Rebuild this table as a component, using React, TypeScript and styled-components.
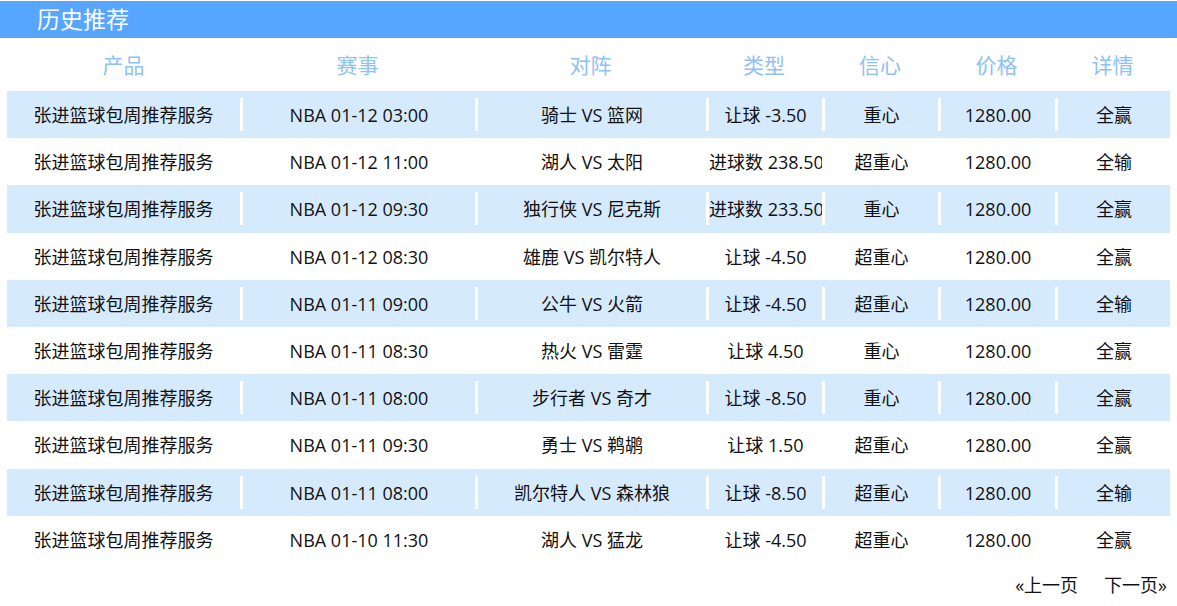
import styled, { createGlobalStyle } from "styled-components";

const GlobalStyle = createGlobalStyle`
    html, body {
        margin: 0;
        padding: 0;
        background: #ffffff;
        font-family: "Open Sans", "Noto Sans CJK SC", sans-serif;
    }
`;

const Page = styled.div`
    width: 1177px;
    padding-top: 1px;
`;

const TitleBar = styled.div`
    height: 37px;
    background: #56a5ff;
    color: #ffffff;
    font-size: 23px;
    line-height: 37px;
    padding-left: 37px;
`;

const Table = styled.div`
    margin: 0 7px;
    width: 1163px;
`;

const COLS = "233px 235px 231px 116px 116px 117px 115px";

const HeadRow = styled.div`
    display: grid;
    grid-template-columns: ${COLS};
    height: 53px;
    align-items: center;
`;

const HeadCell = styled.div`
    text-align: center;
    color: #8ec2f4;
    font-size: 21px;
    margin-top: -2px;
`;

const Row = styled.div<{ $shaded: boolean }>`
    display: grid;
    grid-template-columns: ${COLS};
    height: 47.2px;
    align-items: center;
    background: ${(p) => (p.$shaded ? "#d6eafd" : "#ffffff")};
`;

const Cell = styled.div<{ $first?: boolean }>`
    height: 33px;
    line-height: 35px;
    font-size: 18px;
    color: #111111;
    text-align: center;
    white-space: nowrap;
    overflow: hidden;
    border-left: ${(p) => (p.$first ? "none" : "3px solid #ffffff")};
`;

const Pager = styled.div`
    display: flex;
    justify-content: flex-end;
    gap: 26px;
    padding: 10px 10px 0 0;
    font-size: 18px;
    line-height: 24px;
    color: #111111;
`;

const PageLink = styled.a`
    color: inherit;
    text-decoration: none;
    cursor: pointer;
`;

const heads = ["产品", "赛事", "对阵", "类型", "信心", "价格", "详情"];

const rows = [
    ["NBA 01-12 03:00", "骑士 VS 篮网", "让球 -3.50", "重心", "全赢"],
    ["NBA 01-12 11:00", "湖人 VS 太阳", "进球数 238.50", "超重心", "全输"],
    ["NBA 01-12 09:30", "独行侠 VS 尼克斯", "进球数 233.50", "重心", "全赢"],
    ["NBA 01-12 08:30", "雄鹿 VS 凯尔特人", "让球 -4.50", "超重心", "全赢"],
    ["NBA 01-11 09:00", "公牛 VS 火箭", "让球 -4.50", "超重心", "全输"],
    ["NBA 01-11 08:30", "热火 VS 雷霆", "让球 4.50", "重心", "全赢"],
    ["NBA 01-11 08:00", "步行者 VS 奇才", "让球 -8.50", "重心", "全赢"],
    ["NBA 01-11 09:30", "勇士 VS 鹈鹕", "让球 1.50", "超重心", "全赢"],
    ["NBA 01-11 08:00", "凯尔特人 VS 森林狼", "让球 -8.50", "超重心", "全输"],
    ["NBA 01-10 11:30", "湖人 VS 猛龙", "让球 -4.50", "超重心", "全赢"],
];

const App = () => {
    return (
        <Page>
            <GlobalStyle />
            <TitleBar>历史推荐</TitleBar>
            <Table>
                <HeadRow>
                    {heads.map((h) => (
                        <HeadCell key={h}>{h}</HeadCell>
                    ))}
                </HeadRow>
                {rows.map(([match, teams, type, level, result], i) => (
                    <Row key={i} $shaded={i % 2 === 0}>
                        <Cell $first>张进篮球包周推荐服务</Cell>
                        <Cell>{match}</Cell>
                        <Cell>{teams}</Cell>
                        <Cell>{type}</Cell>
                        <Cell>{level}</Cell>
                        <Cell>1280.00</Cell>
                        <Cell>{result}</Cell>
                    </Row>
                ))}
            </Table>
            <Pager>
                <PageLink>«上一页</PageLink>
                <PageLink>下一页»</PageLink>
            </Pager>
        </Page>
    );
};

export default App;
